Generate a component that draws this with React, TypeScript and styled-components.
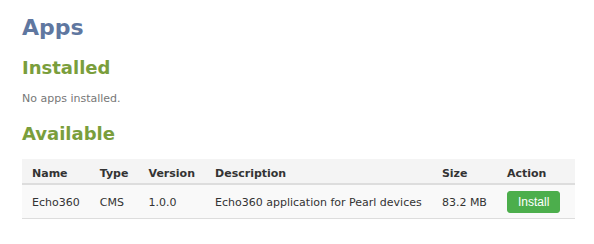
import styled, { createGlobalStyle } from "styled-components";

const GlobalStyle = createGlobalStyle`
  body {
    margin: 0;
    background: #fff;
    font-family: "DejaVu Sans", Verdana, sans-serif;
    color: #333;
  }
`;

const apps = [
  {
    name: "Echo360",
    type: "CMS",
    version: "1.0.0",
    description: "Echo360 application for Pearl devices",
    size: "83.2 MB",
  },
];

export default function App() {
  return (
    <>
      <GlobalStyle />
      <Page>
        <Title>Apps</Title>
        <Section>Installed</Section>
        <Empty>No apps installed.</Empty>
        <Section>Available</Section>
        <Table>
          <thead>
            <tr>
              <Th>Name</Th>
              <Th>Type</Th>
              <Th>Version</Th>
              <Th>Description</Th>
              <Th>Size</Th>
              <Th $width={58}>Action</Th>
            </tr>
          </thead>
          <tbody>
            {apps.map((app) => (
              <tr key={app.name}>
                <Td>{app.name}</Td>
                <Td>{app.type}</Td>
                <Td>{app.version}</Td>
                <Td>{app.description}</Td>
                <Td>{app.size}</Td>
                <Td>
                  <InstallButton>Install</InstallButton>
                </Td>
              </tr>
            ))}
          </tbody>
        </Table>
      </Page>
    </>
  );
}

const Page = styled.div`
  padding: 13px 19px 0 22px;
`;

const Title = styled.h1`
  margin: 0 0 13px;
  font-size: 22px;
  line-height: 30px;
  font-weight: bold;
  color: #5f77a0;
`;

const Section = styled.h2`
  margin: 0;
  font-size: 18px;
  line-height: 24px;
  font-weight: bold;
  color: #7a9e3c;
`;

const Empty = styled.p`
  margin: 12px 0 16px;
  font-size: 11px;
  line-height: 14px;
  color: #777;
`;

const Table = styled.table`
  width: 553px;
  margin-top: 13px;
  border-collapse: collapse;
  font-size: 11px;
  line-height: 13px;
`;

const Th = styled.th<{ $width?: number }>`
  text-align: left;
  font-weight: bold;
  padding: 8px 10px 3px;
  background: #f4f4f4;
  border-bottom: 2px solid #ddd;
  color: #333;
  ${(p) => (p.$width ? `width: ${p.$width}px;` : "")}
`;

const Td = styled.td`
  padding: 6px 10px 5px;
  background: #f9f9f9;
  border-bottom: 1px solid #ddd;
  color: #333;
  white-space: nowrap;
  vertical-align: middle;
`;

const InstallButton = styled.button`
  display: block;
  font-family: "Liberation Sans", Arial, sans-serif;
  font-size: 12px;
  line-height: 14px;
  color: #fff;
  background: #4cae4c;
  border: 1px solid #4cae4c;
  border-radius: 3px;
  padding: 3px 10px;
  cursor: pointer;
`;
